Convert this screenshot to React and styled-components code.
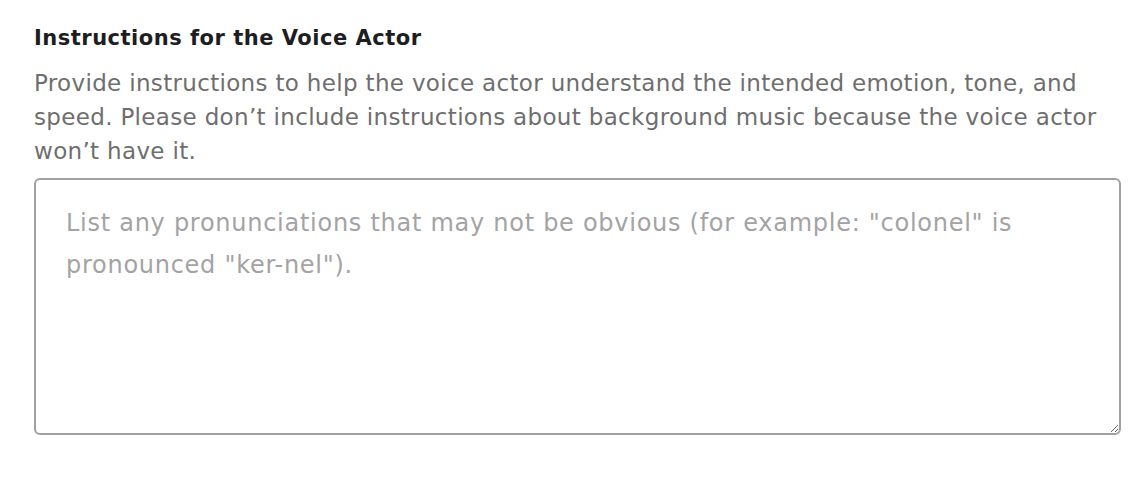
import styled, { createGlobalStyle } from 'styled-components';
import { useState } from 'react';

const GlobalStyle = createGlobalStyle`
  html, body {
    margin: 0;
    background: #ffffff;
  }
`;

const Wrapper = styled.section`
  padding: 22px 19px 0 34px;
  font-family: 'DejaVu Sans', 'Noto Sans', sans-serif;
`;

const Title = styled.h3`
  margin: 0 0 12px;
  font-size: 21px;
  line-height: 32px;
  font-weight: 700;
  letter-spacing: 0.5px;
  color: #1d1d22;
`;

const Description = styled.p`
  margin: 0 -15px 10px 0;
  font-size: 23px;
  line-height: 34px;
  letter-spacing: 0.33px;
  color: #6e6e6e;
`;

const TextArea = styled.textarea`
  display: block;
  box-sizing: border-box;
  width: 100%;
  height: 257px;
  padding: 22px 30px;
  border: 2px solid #a0a0a0;
  border-radius: 6px;
  font-family: 'DejaVu Sans', 'Noto Sans', sans-serif;
  font-size: 24px;
  line-height: 42px;
  letter-spacing: 0.73px;
  color: #333;
  resize: both;
  outline: none;

  &::placeholder {
    color: #a3a3a3;
  }
`;

const App = () => {
  const [value, setValue] = useState('');

  return (
    <Wrapper>
      <GlobalStyle />
      <Title>Instructions for the Voice Actor</Title>
      <Description>
        Provide instructions to help the voice actor understand the intended emotion, tone, and
        speed. Please don’t include instructions about background music because the voice actor
        won’t have it.
      </Description>
      <TextArea
        name='instructions'
        value={value}
        onChange={(e) => setValue(e.target.value)}
        placeholder='List any pronunciations that may not be obvious (for example: "colonel" is pronounced "ker-nel").'
      />
    </Wrapper>
  );
};

export default App;
